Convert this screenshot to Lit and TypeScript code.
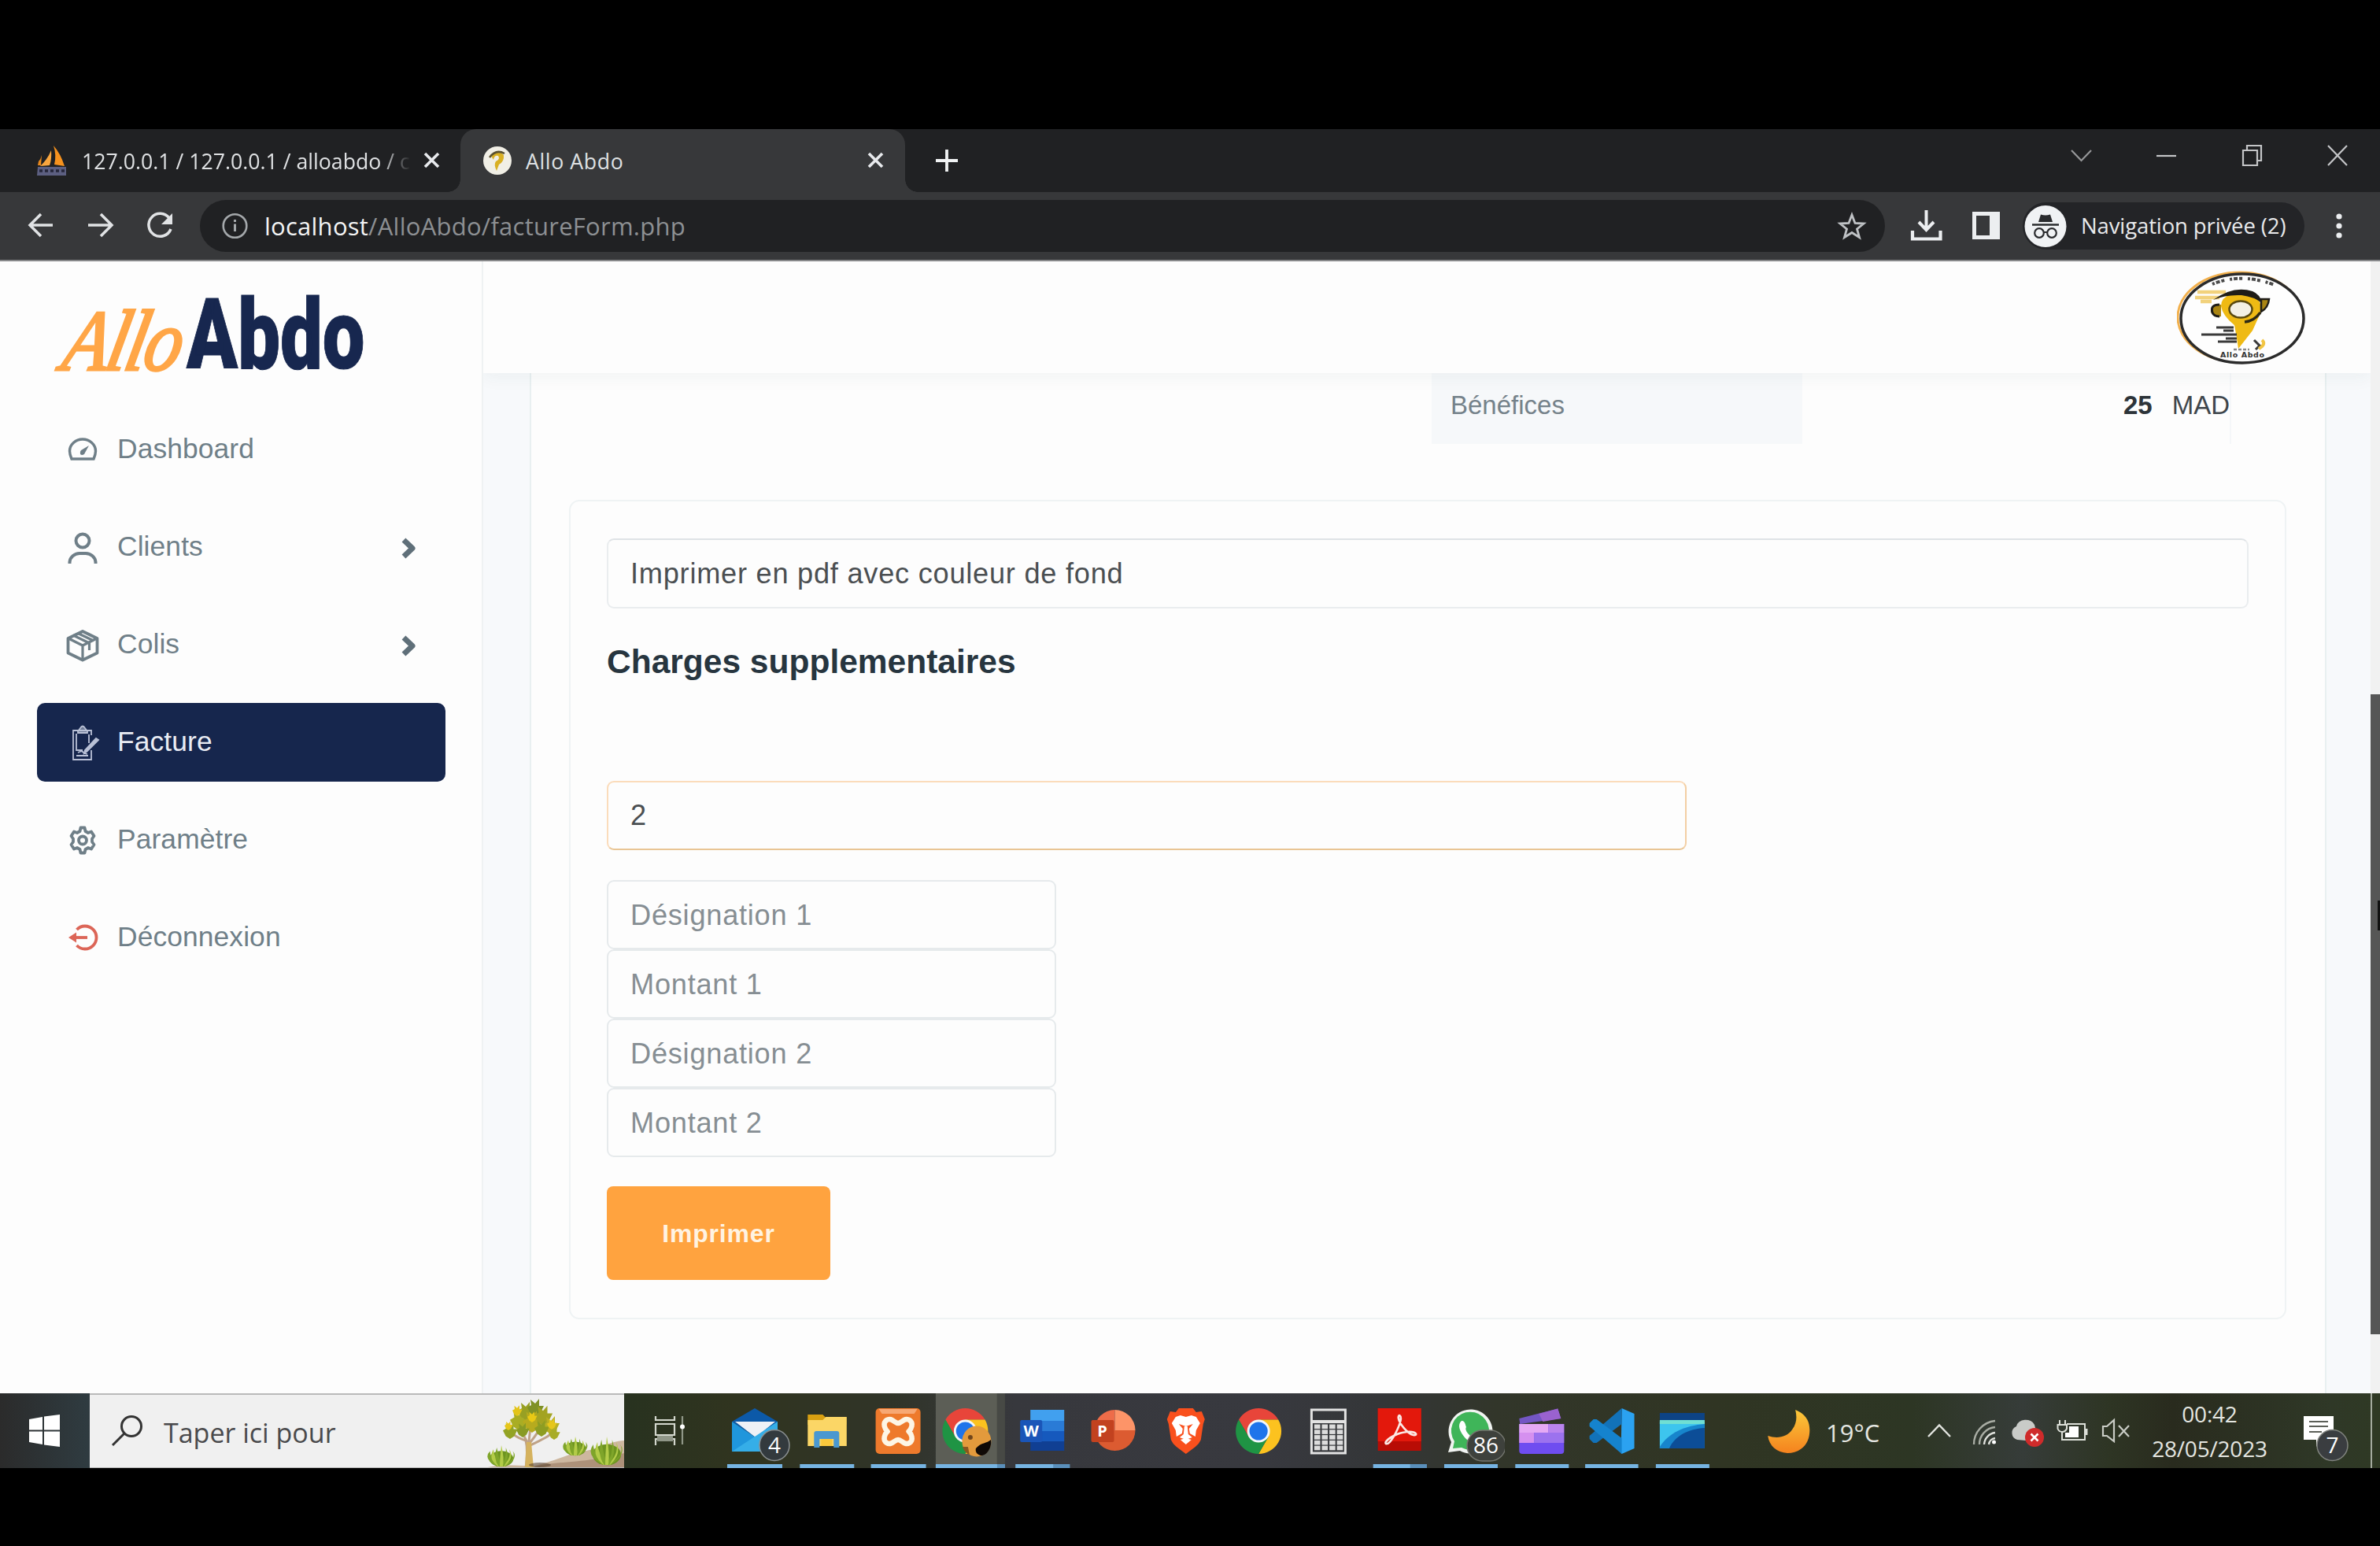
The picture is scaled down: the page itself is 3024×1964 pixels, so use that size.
import { LitElement, html, svg, css, TemplateResult } from "lit";
import { customElement } from "lit/decorators.js";
import { classMap } from "lit/directives/class-map.js";

/* Every icon uses desktop coordinates in its viewBox, so shapes line up across bars. */
const icon = (x: number, y: number, w: number, h: number, body: unknown) =>
  html`<svg class="ico" width=${w} height=${h} viewBox="${x} ${y} ${w} ${h}" fill="none">${body}</svg>`;

const chromeMark = (cx: number, cy: number, r: number) => svg`
  <g transform="translate(${cx} ${cy}) scale(${r})">
    <path d="M-.866-.5A1 1 0 0 1 .866-.5L0-.5L-.433 .25Z" fill="#e8453a"/>
    <path d="M.866-.5A1 1 0 0 1 0 1L.433 .25L0-.5Z" fill="#fcc21f"/>
    <path d="M0 1A1 1 0 0 1-.866-.5L-.433 .25L.433 .25Z" fill="#1f9444"/>
    <circle r=".5" fill="#f4f7fa"/><circle r=".4" fill="#1f74ea"/>
  </g>`;

/* An egg-shaped clump of pointed blades growing out of one foot. */
const bush = (cx: number, foot: number, rx: number, h: number) => {
  const blades = [-1, 1, -0.7, 0.7, -0.4, 0.4, 0];
  return svg`<ellipse cx=${cx} cy=${foot - h * 0.36} rx=${rx * 0.9} ry=${h * 0.37} fill="#6d9420"/>
    ${blades.map((k, i) => {
      const tx = cx + rx * k * 0.85;
      const ty = foot - h * (1 - 0.28 * Math.abs(k));
      return svg`<path d="M${cx + k * 3 - 2} ${foot}Q${cx + rx * k * 1.3 - 2} ${foot - h * 0.35} ${tx} ${ty}Q${cx + rx * k * 1.1 + 4} ${foot - h * 0.4} ${cx + k * 3 + 2} ${foot}Z"
        fill=${i % 4 < 2 ? "#7fa52a" : "#b3cc48"}/>`;
    })}`;
};

const canopy: [number, number, number, string][] = [
  [648, 1819, 9, "#93a324"], [659, 1806, 11, "#a9ad24"], [668, 1794, 10, "#98a023"],
  [680, 1790, 10, "#7f9126"], [676, 1808, 12, "#b7ab1e"], [690, 1800, 11, "#a3a322"],
  [700, 1812, 10, "#b9b023"], [664, 1818, 8, "#889a25"], [688, 1816, 9, "#8e9d22"],
  [704, 1822, 7, "#a8ac28"], [657, 1793, 6, "#e3c41a"], [676, 1801, 6, "#e8c915"],
  [646, 1812, 5, "#e6c61a"], [701, 1810, 6, "#e6c61a"],
];

const scenery = svg`
  <path d="M616 1865C640 1858 660 1863 680 1862C712 1854 722 1846 745 1843C765 1838 780 1830 793 1830V1865Z" fill="#cdb79f"/>
  <path d="M680 1863C705 1856 740 1860 793 1846V1865H676Z" fill="#ad9179"/>
  <path d="M668 1865C670 1850 670 1838 668 1830C655 1826 648 1820 645 1812M670 1832C664 1822 662 1816 660 1808M672 1832C673 1820 674 1812 676 1804M674 1832C682 1822 686 1816 690 1808M674 1836C690 1828 700 1824 705 1816" stroke="#bfa286" stroke-width="3"/>
  <path d="M667 1865L669 1832H675L678 1865Z" fill="#d5b25e"/>
  <ellipse cx="686" cy="1861" rx="14" ry="3" fill="#5c4632" opacity=".6"/>
  ${canopy.map(([x, y, r, c]) => svg`<path fill=${c}
    d="M${x - r} ${y - r * 0.2}L${x - r * 0.5} ${y - r * 0.5}L${x - r * 0.6} ${y - r * 1.2}L${x} ${y - r * 0.7}L${x + r * 0.5} ${y - r * 1.3}L${x + r * 0.5} ${y - r * 0.4}L${x + r * 1.1} ${y - r * 0.4}L${x + r * 0.6} ${y + r * 0.6}L${x} ${y + r}L${x - r * 0.6} ${y + r * 0.6}Z"/>`)}
  ${bush(637, 1863, 17, 27)} ${bush(731, 1849, 15, 24)} ${bush(771, 1861, 20, 36)}`;

interface App { name: string; line?: [number, number, number?]; art: TemplateResult }

const apps: App[] = [
  { name: "Mail", line: [924, 994], art: svg`
    <path d="M930 1806L959 1789L988 1806L960 1826Z" fill="#0c59a8"/>
    <path d="M934 1806H985L960 1826Z" fill="#eef1f6"/>
    <path d="M930 1806L960 1826L988 1806V1844H930Z" fill="#1f96dc"/><path d="M930 1844L988 1806V1844Z" fill="#35aee8"/>
    <ellipse cx="984" cy="1836" rx="19" ry="19.5" fill="#333a3e" stroke="#8b9092" stroke-width="1.5"/>
    <text class="badge" x="984" y="1846" text-anchor="middle">4</text>` },
  { name: "Explorateur", line: [1016, 1085], art: svg`
    <path d="M1026 1797H1045L1049 1801H1075V1810H1026Z" fill="#d9a011"/>
    <path d="M1026 1804H1045L1049 1800H1075.500V1837H1026Z" fill="#fbd666"/>
    <path d="M1034 1839V1821Q1034 1818 1037 1818H1063Q1066 1818 1066 1821V1839H1059V1828H1041V1839Z" fill="#4a98d0"/>
    <path d="M1043 1828H1057V1837H1043Z" fill="#fbc93c"/>` },
  { name: "XAMPP", line: [1107, 1177], art: svg`
    <rect x="1113" y="1789" width="57" height="58" rx="5" fill="#ee7a2c"/><path d="M1117 1790H1166L1162 1796H1121Z" fill="#f7a873"/>
    <path d="M1127 1804C1133 1800 1137 1808 1141.500 1808C1146 1808 1150 1800 1156 1804C1162 1808 1158 1816 1155 1818.500C1158 1821 1162 1829 1156 1833C1150 1837 1146 1829 1141.500 1829C1137 1829 1133 1837 1127 1833C1121 1829 1125 1821 1128 1818.500C1125 1816 1121 1808 1127 1804Z" stroke="#fdf6e6" stroke-width="6.500" stroke-linejoin="round"/>` },
  { name: "Chrome", line: [1189, 1277, 1267], art: svg`
    <rect x="1189" y="1770" width="78" height="95" fill="#5c5e56"/><rect x="1267" y="1770" width="10" height="95" fill="#474945"/>
    ${chromeMark(1226.5, 1818, 29)}
    <ellipse cx="1241" cy="1831" rx="18.500" ry="19.500" fill="#e39a3c"/>
    <path d="M1240 1840C1247 1832 1254 1834 1259 1829C1261 1838 1254 1850 1246 1849C1242 1848 1239 1845 1240 1840Z" fill="#0f0906"/>
    <path d="M1223 1838Q1226 1846 1232 1848L1230 1838Z" fill="#8a5720"/><circle cx="1233" cy="1826" r="3" fill="#70461c"/>` },
  { name: "Word", line: [1290, 1359, 1338], art: svg`
    <path d="M1309 1791H1352V1805H1309Z" fill="#41a0ef"/><path d="M1309 1805H1352V1818H1309Z" fill="#2a7bd6"/>
    <path d="M1309 1818H1352V1831H1309Z" fill="#1659bd"/><path d="M1309 1831H1352V1843H1309Z" fill="#103f93"/>
    <rect x="1296" y="1804" width="28" height="28" rx="2" fill="#1a55b8"/>
    <text class="mark" x="1310" y="1825" text-anchor="middle">W</text>` },
  { name: "PowerPoint", art: svg`
    <path d="M1417 1791A26 26 0 0 0 1391 1817H1417Z" fill="#ee6c49"/><path d="M1417 1791A26 26 0 0 1 1443 1817H1417Z" fill="#fd9468"/>
    <path d="M1391 1817A26 26 0 0 0 1443 1817Z" fill="#dc5b31"/>
    <rect x="1387" y="1804" width="29" height="28" rx="2" fill="#c2421f"/>
    <text class="mark" x="1401" y="1825" text-anchor="middle">P</text>` },
  { name: "Brave", art: svg`
    <path d="M1494 1794L1498 1789H1516L1520 1794L1527 1793L1531 1803L1529 1809L1526 1829Q1524 1834 1519 1838L1507 1847L1495 1838Q1490 1834 1488 1829L1485 1809L1483 1803L1487 1793Z" fill="#f9501d"/>
    <path d="M1494 1800L1500 1798L1507 1800L1514 1798L1520 1800L1525 1808L1520 1817L1519 1825L1512 1821L1511 1815L1516 1809L1507 1812L1498 1809L1503 1815L1502 1821L1495 1825L1494 1817L1489 1808Z" fill="#fff"/>
    <path d="M1505 1812H1509L1510 1822L1515 1826L1507 1829L1499 1826L1504 1822Z" fill="#fff"/><path d="M1500 1829L1507 1827L1514 1829L1507 1835Z" fill="#fff"/>` },
  { name: "Chrome", art: chromeMark(1599, 1818, 29) },
  { name: "Calculatrice", art: svg`
    <rect x="1666" y="1791" width="43" height="55" stroke="#e3e3e3" stroke-width="3"/><path d="M1666 1804H1709V1808H1666Z" fill="#e3e3e3"/>
    ${[0, 1, 2, 3].map((c) => [0, 1, 2, 3, 4].map((r) => svg`<rect x=${1669.5 + c * 9.6} y=${1809.5 + r * 6.8} width="7.600" height="5.600" fill="#dcdcdc"/>`))}` },
  { name: "Acrobat", line: [1745, 1813, 1792], art: svg`
    <rect x="1751" y="1789" width="55" height="54" fill="#b80c05"/><rect x="1751" y="1789" width="55" height="42" fill="#e3180c"/>
    <path d="M1761 1832C1764 1827 1776 1820 1788 1819C1801 1818 1802 1824 1796 1823C1788 1821 1778 1808 1777 1801C1777 1796 1781 1798 1780 1804C1778 1814 1770 1828 1766 1832C1763 1835 1760 1835 1761 1832Z" stroke="#fbe9e6" stroke-width="2.600"/>` },
  { name: "WhatsApp", line: [1835, 1903], art: svg`
    <path d="M1840 1845L1844 1832A28 28 0 1 1 1855 1843Z" fill="#f1f4f1"/><path d="M1846 1840L1848 1831A24 24 0 1 1 1857 1839Z" fill="#3fb559"/>
    <path d="M1857 1805C1861 1804 1862 1810 1863 1813C1860 1817 1868 1825 1873 1827C1877 1823 1880 1826 1883 1829C1880 1838 1868 1834 1861 1826C1855 1819 1851 1810 1857 1805Z" fill="#fff"/>
    <rect x="1864" y="1817" width="49" height="39" rx="19.500" fill="#3e413c" stroke="#74766f" stroke-width="1.500"/>
    <text class="badge" x="1888" y="1846" text-anchor="middle">86</text>` },
  { name: "Clipchamp", line: [1925, 1993], art: svg`
    <path d="M1930 1802L1979 1789.500L1983 1802L1931 1809Z" fill="#7356c4"/><path d="M1955 1796L1979 1789.500L1983 1802L1960 1806Z" fill="#9a62cf"/>
    <path d="M1930 1809H1987V1843Q1987 1847 1983 1847H1934Q1930 1847 1930 1843Z" fill="#6f4df0"/>
    <path d="M1930 1809H1967V1820H1930Z" fill="#e5a9f4"/><path d="M1967 1809H1987V1820H1967Z" fill="#ba84ee"/>
    <path d="M1930 1820H1949V1833H1930Z" fill="#d590ef"/><path d="M1949 1820H1987V1833H1949Z" fill="#9c72ee"/>` },
  { name: "Code", line: [2014.5, 2082], art: svg`
    <path d="M2061 1789L2077 1796V1840L2061 1847L2060 1846Z" fill="#2ba2f1"/>
    <path d="M2061 1789V1809L2029 1833L2025 1833L2020 1828V1824Z" fill="#1272b9"/>
    <path d="M2061 1847V1827L2029 1803L2025 1803L2020 1808V1812Z" fill="#1583ce"/>` },
  { name: "Bureau distant", line: [2104, 2172], art: svg`
    <rect x="2109" y="1795" width="57" height="45" fill="#0d4385"/>
    <path d="M2109 1806H2166V1840H2109Z" fill="#3dc5ee"/><path d="M2109 1804H2166V1809H2109Z" fill="#70dfd3"/>
    <path d="M2109 1838C2120 1820 2142 1811 2166 1809V1840H2109Z" fill="#1785cc"/><path d="M2121 1840C2128 1824 2146 1815 2166 1814V1840Z" fill="#0c4d97"/>` },
];
const SLOT = 90.7;
const APPS_LEFT = 914;

interface Entry { label: string; more?: boolean; active?: boolean; art: TemplateResult }

const entries: Entry[] = [
  { label: "Dashboard", art: svg`
    <path d="M91 583Q88.500 577 88.500 573A16.500 15 0 0 1 121.500 573Q121.500 577 119 583Z" stroke="currentColor" stroke-width="3.400"/>
    <path d="M113 566L107 577Q104 579 102 577Q101 574 103 572Z" fill="currentColor"/>` },
  { label: "Clients", more: true, art: svg`
    <ellipse cx="105" cy="687" rx="8.500" ry="8.500" stroke="currentColor" stroke-width="4"/>
    <path d="M88.500 716V714A13 12 0 0 1 101 703H109A13 12 0 0 1 121.500 714V716" stroke="currentColor" stroke-width="4"/>` },
  { label: "Colis", more: true, art: svg`
    <g stroke="currentColor" stroke-width="3.800" stroke-linejoin="round"><path d="M105 802L123.500 811V829.500L105 838.500L86.500 829.500V811Z"/>
    <path d="M87 811L105 820L123 811M105 820V838M93 807L113.500 817V826M99 804.500L119 814" stroke-width="3.200"/></g>` },
  { label: "Facture", active: true, art: svg`
    <g stroke="#b9c1d6" stroke-width="1.800"><path d="M116 934V928H93V965H116V953M97 932V953H105M97 960H112M113 933V944"/>
    <path d="M99 929L102 925Q105 920 108 925L111 929V931H99Z" fill="#b9c1d6" fill-opacity=".55"/>
    <path d="M125 940L110 955L107 957L108 953L122 938Z" fill="#b9c1d6"/><path d="M99 956L104 954L107 957L111 958"/></g>` },
  { label: "Paramètre", art: svg`
    <circle cx="105" cy="1067.500" r="5" stroke="currentColor" stroke-width="3.800"/>
    <path d="M101.500 1056L102.500 1051.500H107.500L108.500 1056L112 1058L116 1056.500L119.500 1062L117 1065.500V1069.500L119.500 1073L116 1078.500L112 1077L108.500 1079L107.500 1083.500H102.500L101.500 1079L98 1077L94 1078.500L90.500 1073L93 1069.500V1065.500L90.500 1062L94 1056.500L98 1058Z" stroke="currentColor" stroke-width="3.800" stroke-linejoin="round"/>` },
  { label: "Déconnexion", art: svg`
    <g stroke="#dc6557" stroke-width="3.800"><path d="M97.500 1181A14.500 14.500 0 1 1 97.500 1201"/><path d="M93 1191H111"/></g>
    <path d="M87 1191L97 1184.500V1197.500Z" fill="#dc6557"/>` },
];

@customElement("browser-chrome")
class BrowserChrome extends LitElement {
  static styles = css`
    :host { display: block; font-family: "Open Sans", sans-serif; color: #dfe1e3; }
    .ico { display: block; flex: none; }
    .tabs { display: flex; height: 80px; background: #202123; }
    .tab { display: flex; align-items: center; box-sizing: border-box; font-size: 26.700px; white-space: nowrap; }
    .first { width: 585px; padding-left: 46px; }
    .first .title { width: 430px; margin-left: 19px; overflow: hidden;
      mask-image: linear-gradient(90deg, #000 380px, transparent 418px); }
    .current { width: 565px; padding-left: 29px; background: #37383a; border-radius: 20px 20px 0 0; position: relative; }
    .current .title { width: 430px; margin-left: 18px; letter-spacing: 0.600px; }
    .foot { position: absolute; bottom: 0; width: 16px; height: 16px; }
    .foot.l { right: 100%; background: radial-gradient(circle at 0 0, transparent 15.500px, #37383a 16px); }
    .foot.r { left: 100%; background: radial-gradient(circle at 100% 0, transparent 15.500px, #37383a 16px); }
    .rest { display: flex; flex: 1; justify-content: space-between; }
    .bar { display: flex; align-items: center; height: 86px; background: #37383a; }
    .edge { height: 2px; background: #87888a; }
    .omni { display: flex; align-items: center; width: 2141px; height: 66px; border-radius: 33px; background: #202123; }
    .url { flex: 1; font-size: 31px; letter-spacing: 0.250px; color: #8d9093; white-space: nowrap; margin-left: 21px; }
    .host { color: #f3f4f5; }
    .pill { display: flex; align-items: center; width: 358px; height: 60px; border-radius: 30px; background: #232427; font-size: 27.500px; letter-spacing: -0.120px; white-space: nowrap; }
    .pill span { margin-left: 18px; padding-bottom: 2px; color: #e9eaec; }
  `;
  render() {
    return html`
      <div class="tabs">
        <div class="tab first">
          ${icon(46, 184, 39, 42, svg`<path d="M68 186Q77 196 82 212L69 210Q72 198 68 186Z" fill="#f6921e"/><path d="M65 192Q66 203 63 211L51 212Q60 204 65 192Z" fill="#f9a63f"/>
            <path d="M49 206Q52 203 53 198L52 211H48Z" fill="#e8881c"/><path d="M48 213H84V224H47Z" fill="#6c6f98" opacity=".8"/>
            <path d="M50 218H82" stroke="#26273a" stroke-width="3.500" stroke-dasharray="4 3"/>`)}
          <div class="title">127.0.0.1 / 127.0.0.1 / alloabdo / c</div>
          ${icon(534, 190, 30, 30, svg`<path d="M540 196L557 213M557 196L540 213" stroke="#e8eaed" stroke-width="3.600"/>`)}
        </div>
        <div class="tab current">
          <i class="foot l"></i>
          ${icon(614, 186, 36, 38, svg`<circle cx="632" cy="205" r="18" fill="#f1efe6"/><path d="M624 199Q632 190 640 198Q641 206 634 210L631 218Q627 210 630 206Q636 203 633 199Q628 198 627 204Z" fill="#d9b024"/>
            <path d="M622 201Q630 190 641 196" stroke="#5a5130" stroke-width="2.500"/>`)}
          <div class="title">Allo Abdo</div>
          ${icon(1098, 190, 30, 30, svg`<path d="M1104 196L1121 213M1121 196L1104 213" stroke="#e8eaed" stroke-width="3.600"/>`)}
          <i class="foot r"></i>
        </div>
        <div class="rest">
          ${icon(1150, 164, 100, 80, svg`<path d="M1203 190V218M1189 204H1217" stroke="#f1f3f4" stroke-width="3.800"/>`)}
          ${icon(2604, 164, 420, 80, svg`<g stroke="#c4c5c7" stroke-width="2.200"><path d="M2632 191L2644.500 204L2657 191" stroke="#97989a"/><path d="M2740 198H2765"/>
            <path d="M2850 191H2868V210H2850ZM2855 190V185H2873V204H2869"/><path d="M2958 185L2982 210M2982 185L2958 210"/></g>`)}
        </div>
      </div>
      <div class="bar">
        ${icon(0, 244, 254, 86, svg`<g stroke="#e1e3e5" stroke-width="3.500"><path d="M67 286H39M52 272L38 286L52 300"/><path d="M112 286H141M128 272L142 286L128 300"/>
          <path d="M215 277A14.500 14.500 0 1 0 217 291"/></g><path d="M219 271V285H205Z" fill="#e1e3e5"/>`)}
        <div class="omni">
          ${icon(254, 254, 61, 66, svg`<circle cx="298.500" cy="287" r="14.800" stroke="#a4a8ab" stroke-width="2.600"/><path d="M298.500 284.500V294M298.500 279V282" stroke="#a4a8ab" stroke-width="3"/>`)}
          <div class="url"><span class="host">localhost</span>/AlloAbdo/factureForm.php</div>
          ${icon(2325, 254, 70, 66, svg`<path d="M2353 273L2357 283.500L2368 284L2359.500 291L2362.500 301.500L2353 295.500L2343.500 301.500L2346.500 291L2338 284L2349 283.500Z" stroke="#bfc2c5" stroke-width="2.800"/>`)}
        </div>
        ${icon(2395, 244, 175, 86, svg`<path d="M2447.500 267V290M2438 282L2447.500 292L2457 282" stroke="#eceef0" stroke-width="4"/><path d="M2430 293V303.500H2465.500V293" stroke="#eceef0" stroke-width="4.200"/>
          <path d="M2506 269H2541V304H2506ZM2511 274V299H2528V274Z" fill="#eceef0" fill-rule="evenodd"/>`)}
        <div class="pill">
          ${icon(2570, 256, 56, 60, svg`<circle cx="2599" cy="286.500" r="26.500" fill="#f0f2f4"/><path d="M2590 281L2593 271.500Q2599 273.500 2605 271.500L2608 281Z" fill="#2a2b2e"/><path d="M2582 284.500H2616" stroke="#2a2b2e" stroke-width="2.400"/>
            <circle cx="2591" cy="295" r="5.800" stroke="#2a2b2e" stroke-width="2.200"/><circle cx="2607" cy="295" r="5.800" stroke="#2a2b2e" stroke-width="2.200"/><path d="M2596 294H2602" stroke="#2a2b2e" stroke-width="2"/>`)}
          <span>Navigation privée (2)</span>
        </div>
        ${icon(2928, 244, 90, 86, svg`<g fill="#eceef0"><circle cx="2972" cy="275" r="3.600"/><circle cx="2972" cy="287" r="3.600"/><circle cx="2972" cy="299" r="3.600"/></g>`)}
      </div>
      <div class="edge"></div>`;
  }
}

@customElement("site-page")
class SitePage extends LitElement {
  static styles = css`
    :host { display: flex; height: 1438px; background: #fdfdfd; font-family: "Liberation Sans", Arial, sans-serif; overflow: hidden; }
    .ico { display: block; flex: none; }
    aside { width: 614px; box-sizing: border-box; border-right: 2px solid #eff2f3; padding: 30px 46px 0 47px; background: #fdfdfd; position: relative; z-index: 1; }
    .brand { display: flex; align-items: flex-start; height: 123px; white-space: nowrap; margin-bottom: 36px; }
    .script { font: italic 400 110px/123px "Liberation Serif", serif; color: #ffa647; width: 160px; margin-left: 30px; padding-top: 10px;
      -webkit-text-stroke: 3.200px #ffa647; }
    .script span { display: inline-block; transform: skewX(-12deg) scaleX(0.86); transform-origin: 0 75%; letter-spacing: -3px; }
    .heavy { font: 900 125px/123px Roboto, sans-serif; color: #17274f; padding-top: 2px; }
    .heavy span { display: inline-block; transform: scaleX(0.765); transform-origin: 0 0; -webkit-text-stroke: 1px #17274f; }
    nav { display: flex; flex-direction: column; gap: 24px; }
    .entry { display: flex; align-items: center; height: 100px; border-radius: 10px; color: #6f7f88; font-size: 35.400px; letter-spacing: 0.100px; }
    .entry .label { flex: 1; margin-left: 16px; padding-bottom: 1px; }
    .entry.active { background: #16264d; color: #e9ecf4; }
    main { flex: 1; display: flex; flex-direction: column; background: #f7f9fb; }
    header { display: flex; justify-content: flex-end; height: 142px; padding: 12px 83px 0 0; box-sizing: border-box; background: #fdfdfd;
      box-shadow: 0 4px 22px rgba(40, 60, 60, 0.060); position: relative; }
    .sheet { flex: 1; margin: 0 56px 0 59px; border: solid #e9f0f1; border-width: 0 2px; background: #fdfdfd; padding: 0 49px 0 48px; }
    .totals { display: flex; height: 90px; margin: 0 70px 71px 1096px; border-right: 2px solid #f5f7f9; font-size: 33px; line-height: 82px; color: #3f464c; }
    .totals .name { width: 471px; box-sizing: border-box; padding-left: 24px; background: #f6f8fa; color: #75828a; }
    .totals .sum { flex: 1; display: flex; justify-content: flex-end; gap: 25px; }
    .sum b { color: #2d3439; }
    form { display: flex; flex-direction: column; align-items: flex-start; height: 1041px; box-sizing: border-box; padding: 47px 46px 46px;
      border: 2px solid #eff3f4; border-radius: 13px; }
    input { font: 36.200px "Liberation Sans", Arial, sans-serif; letter-spacing: 0.750px; height: 88.500px; width: 571px; box-sizing: border-box; padding: 1px 27px 0 28px;
      border: 2.500px solid #e6eaec; border-radius: 9px; background: #fdfdfd; color: #4b4f52; outline: none; }
    input::placeholder { color: #868e93; opacity: 1; }
    .wide { width: 100%; border-color: #dfe3e6 #eaedef #eaedef; }
    .count { width: 1372px; border-color: #fbdcbb; border-right-color: #f3cfa4; border-bottom-color: #e9c594; margin-bottom: 38px; }
    h2 { margin: 43px 0 126px; font-size: 42.500px; line-height: 50px; color: #27353f; }
    .lines { display: flex; flex-direction: column; }
    .lines input { height: 88px; }
    button { margin-top: 37px; width: 284px; height: 119px; border: 0; border-radius: 8px; padding: 2px 0 0; background: #ffa33f; color: #fff3e2;
      font: 700 32px "Liberation Sans", Arial, sans-serif; letter-spacing: 0.800px; }
    .scroll { width: 12px; background: #f1f1f1; padding-top: 550px; box-sizing: border-box; position: relative; }
    .thumb { height: 813px; background: #565656; }
    .beam { position: absolute; right: 0; top: 812px; width: 3px; height: 38px; background: #111; }
  `;
  render() {
    const rows = ["Désignation 1", "Montant 1", "Désignation 2", "Montant 2"];
    return html`
      <aside>
        <div class="brand"><div class="script"><span>Allo</span></div><div class="heavy"><span>Abdo</span></div></div>
        <nav>
          ${entries.map((e, i) => html`<div class=${classMap({ entry: true, active: !!e.active })}>
            ${icon(47, 521 + i * 124, 86, 100, e.art)}
            <span class="label">${e.label}</span>
            ${e.more ? icon(500, 521 + i * 124, 66, 100, svg`<path d="M513 ${562 + i * 124}L524 ${572.5 + i * 124}L513 ${583 + i * 124}" stroke="#5f6f79" stroke-width="7" stroke-linejoin="round"/>`) : ""}
          </div>`)}
        </nav>
      </aside>
      <main>
        <header>
          ${icon(2766, 343, 163, 120, svg`
            <ellipse cx="2846" cy="402" rx="79" ry="57" stroke="#f2b04c" stroke-width="3"/>
            <ellipse cx="2849" cy="403.500" rx="78" ry="56.500" fill="#fefefe" stroke="#2b2b2b" stroke-width="3.500"/>
            <path d="M2811 360Q2848 345 2890 361" stroke="#4a4a4a" stroke-width="4" stroke-dasharray="3 2 5 2 4 7"/>
            <path d="M2792 370H2828M2789 377H2820M2796 382H2810" stroke="#f2d27c" stroke-width="4.500"/>
            <path d="M2822 388Q2822 377 2834 373Q2850 369 2866 376Q2876 385 2871 399L2862 419L2844 442Q2842 427 2839 412Q2824 400 2822 388Z" fill="#efba14"/>
            <path d="M2812 380Q2838 361 2862 369Q2872 373 2874 384Q2864 376 2848 374Q2828 373 2812 380Z" fill="#1f1d18"/>
            <path d="M2822 386Q2808 384 2809 395Q2812 403 2822 401Z" fill="#a98412"/><path d="M2820 386Q2808 386 2811 396Q2813 401 2820 401" stroke="#1f1d18" stroke-width="3"/>
            <path d="M2873 379L2883 379Q2882 390 2873 395Z" fill="#a98412" stroke="#1f1d18" stroke-width="2.500"/>
            <ellipse cx="2847" cy="392" rx="14.500" ry="10.500" fill="#f3f0e4" stroke="#5a4a10" stroke-width="2.500"/>
            <path d="M2872 396Q2864 407 2852 408" stroke="#2f2a15" stroke-width="3.500"/>
            <path d="M2816 415H2838M2825 419H2838M2797 424H2842M2828 429H2842M2818 433H2842" stroke="#3a3a3a" stroke-width="3"/>
            <path d="M2864 431L2871 438L2866 443" stroke="#3a3a3a" stroke-width="3"/><path d="M2874 431Q2880 436 2870 442" stroke="#f2c544" stroke-width="4"/>
            <path d="M2838 443H2858" stroke="#888" stroke-width="2.500" stroke-dasharray="4 2"/>
            <text x="2849" y="453" text-anchor="middle" font-family="DejaVu Sans" font-size="9.500" font-weight="700" fill="#333" textLength="56">Allo Abdo</text>`)}
        </header>
        <div class="sheet">
          <div class="totals"><div class="name">Bénéfices</div><div class="sum"><b>25</b><span>MAD</span></div></div>
          <form>
            <input class="wide" .value=${"Imprimer en pdf avec couleur de fond"} />
            <h2>Charges supplementaires</h2>
            <input class="count" .value=${"2"} />
            <div class="lines">${rows.map((r) => html`<input placeholder=${r} />`)}</div>
            <button type="button">Imprimer</button>
          </form>
        </div>
      </main>
      <div class="scroll"><div class="thumb"></div><div class="beam"></div></div>`;
  }
}

@customElement("task-bar")
class TaskBar extends LitElement {
  static styles = css`
    :host { display: flex; align-items: stretch; height: 95px; font-family: "Open Sans", sans-serif; color: #e4e6e1; overflow: hidden;
      background: linear-gradient(90deg, #2b2b2b 0, #2f3b40 110px, #28321f 800px, #30341f 930px, #303428 1130px, #37383d 1290px, #38393f 1600px, #343638 1750px, #32362a 1900px, #303523 2180px, #2d3624 2430px, #363c39 2570px, #2e3524 2680px, #292b1e 2760px, #2f3827 2960px, #2f3924 3024px); }
    .ico { display: block; flex: none; }
    .search { display: flex; align-items: center; width: 679px; box-sizing: border-box; background: #f0f0f0; border: solid #b9b9b9; border-width: 2px 0 1px; color: #4a4a4c; font-size: 34px; white-space: nowrap; }
    .search .hint { flex: 1; padding: 4px 0 0 27px; }
    .apps { display: flex; width: 1269.800px; }
    .badge { font: 28px "Open Sans", sans-serif; fill: #fff; }
    .mark { font: 700 20px "Open Sans", sans-serif; fill: #fff; }
    .temp { width: 68px; font-size: 31px; line-height: 100px; white-space: nowrap; }
    .clock { width: 147px; display: flex; flex-direction: column; align-items: center; padding-top: 4px; font-size: 28px; letter-spacing: -0.200px; line-height: 44px; white-space: nowrap; }
    .rule { width: 2px; background: #a4aa9e; margin-left: auto; margin-right: 10px; }
  `;
  render() {
    return html`
      ${icon(0, 1770, 114, 95, svg`<path d="M37 1803L54 1800V1816.500H37ZM56 1799.500L76 1797V1816.500H56ZM37 1818.500H54V1835L37 1832ZM56 1818.500H76V1838L56 1835.500Z" fill="#fff"/>`)}
      <div class="search">
        ${icon(114, 1772, 67, 92, svg`<circle cx="167" cy="1812" r="12.500" stroke="#333" stroke-width="3"/><path d="M158 1821L143 1836" stroke="#333" stroke-width="3"/>`)}
        <div class="hint">Taper ici pour</div>
        ${icon(613, 1772, 180, 92, scenery)}
      </div>
      ${icon(793, 1770, 121, 95, svg`<g stroke="#d3d7cd" stroke-width="2.200"><path d="M833 1799V1804H857V1799M833 1809H857V1823H833ZM833 1836V1828H857V1836"/><path d="M867 1799V1835" stroke="#8f9687"/></g>
        <path d="M835 1824H855V1831H835Z" fill="#8f9687"/><circle cx="867" cy="1812.500" r="3" fill="#fff"/>`)}
      <div class="apps">
        ${apps.map((a, i) => icon(APPS_LEFT + i * SLOT, 1770, SLOT, 95, svg`<g aria-label=${a.name}>${a.art}
          ${a.line ? svg`<path d="M${a.line[0]} 1860H${a.line[1]}V1865H${a.line[0]}Z" fill="#76b4e3"/>` : ""}
          ${a.line?.[2] ? svg`<path d="M${a.line[2]} 1860H${a.line[1]}V1865H${a.line[2]}Z" fill="#5a8fbb"/>` : ""}</g>`))}
      </div>
      ${icon(2183.8, 1770, 136.2, 95, svg`<defs><linearGradient id="moon" x1="0" y1="0" x2="0" y2="1"><stop offset="0" stop-color="#fbc93a"/><stop offset="1" stop-color="#f5821e"/></linearGradient></defs>
        <path d="M2281 1791C2296 1797 2300 1808 2299 1820C2298 1837 2285 1846 2271 1846C2257 1845 2248 1837 2246 1824C2258 1828 2270 1826 2277 1816C2283 1808 2283 1800 2281 1791Z" fill="url(#moon)"/>`)}
      <div class="temp">19°C</div>
      ${icon(2388, 1770, 346, 95, svg`
        <path d="M2450 1825L2464 1810.500L2478 1825" stroke="#e3e5e0" stroke-width="2.400"/>
        <g stroke="#a9ada4" stroke-width="2.400"><path d="M2508 1835A30 30 0 0 1 2535 1805"/><path d="M2515 1835A22 22 0 0 1 2535 1813"/><path d="M2521 1835A16 16 0 0 1 2535 1820" stroke="#dfe1dc"/><path d="M2527 1835A9 9 0 0 1 2535 1827" stroke="#dfe1dc"/></g><circle cx="2533.500" cy="1832" r="2.500" fill="#fff"/>
        <path d="M2563 1829A9 9 0 0 1 2562 1812A12 10 0 0 1 2585 1810L2588 1822L2574 1830Z" fill="#c9cbc8"/><circle cx="2585" cy="1826" r="12" fill="#cf2b2b"/><path d="M2580.500 1821.500L2589.500 1830.500M2589.500 1821.500L2580.500 1830.500" stroke="#fff" stroke-width="2.600"/>
        <path d="M2626 1809H2649V1829H2620V1820" stroke="#dcdfd8" stroke-width="2"/><path d="M2629 1812H2641V1826H2624V1820H2629Z" fill="#fff"/><path d="M2651 1815V1823" stroke="#dcdfd8" stroke-width="3"/>
        <path d="M2617 1804V1810M2624 1804V1810M2614.500 1810H2626V1815Q2624 1819 2620.500 1819Q2616 1819 2614.500 1815ZM2620 1819V1829" stroke="#dcdfd8" stroke-width="2"/>
        <path d="M2672 1812H2677L2686 1804V1831L2677 1824H2672ZM2692 1811L2705 1825M2705 1811L2692 1825" stroke="#c9ccc5" stroke-width="2.200"/>`)}
      <div class="clock"><span>00:42</span><span>28/05/2023</span></div>
      ${icon(2881, 1770, 120, 95, svg`<path d="M2927 1799H2965V1829H2950L2943 1838V1829H2927Z" fill="#fff"/><path d="M2934 1806H2958M2934 1812H2958M2934 1819H2950" stroke="#5c5f58" stroke-width="2.200"/>
        <circle cx="2963.500" cy="1836" r="19.500" fill="#3a3d40" stroke="#80837e" stroke-width="1.500"/><text class="badge" x="2963.500" y="1846" text-anchor="middle">7</text>`)}
      <div class="rule"></div>`;
  }
}

@customElement("app-root")
class AppRoot extends LitElement {
  static styles = css`
    :host { display: block; box-sizing: border-box; width: 3024px; height: 1964px; padding-top: 164px; background: #000; overflow: hidden; }
  `;
  render() {
    return html`
      <browser-chrome></browser-chrome>
      <site-page></site-page>
      <task-bar></task-bar>`;
  }
}
